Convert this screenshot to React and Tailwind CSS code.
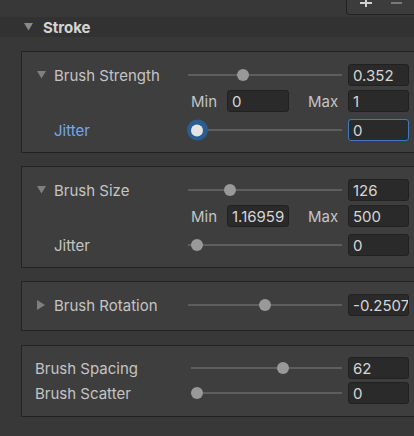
import React from "react";

function TriDown() {
  return (
    <svg width="9" height="8" viewBox="0 0 9 8">
      <polygon points="0,0 9,0 4.5,7.5" fill="#7f7f7f" />
    </svg>
  );
}
function TriRight() {
  return (
    <svg width="8" height="10" viewBox="0 0 8 10">
      <polygon points="0,0 8,5 0,10" fill="#7f7f7f" />
    </svg>
  );
}

function Slider({ frac, focused = false, width = 154, inset = 9 }) {
  const center = inset + frac * 132;
  return (
    <div className="relative h-[22px] flex items-center shrink-0" style={{ width }}>
      <div className="h-[2px] w-full bg-[#5e5e5e]" />
      {focused ? (
        <div
          className="absolute top-1/2 -translate-y-1/2 w-[21px] h-[21px] rounded-full bg-[#2c5d91] flex items-center justify-center"
          style={{ left: center - 10.5 }}
        >
          <div className="w-[12px] h-[12px] rounded-full bg-[#e4e4e4]" />
        </div>
      ) : (
        <div
          className="absolute top-1/2 -translate-y-1/2 w-[12px] h-[12px] rounded-full bg-[#999999]"
          style={{ left: center - 6 }}
        />
      )}
    </div>
  );
}

function Field({ value, w = "w-[61px]", focused = false }) {
  return (
    <div
      className={`${w} h-[22px] shrink-0 rounded-[3px] border ${
        focused ? "border-[#3d7ac0]" : "border-[#212121]"
      } bg-[#2a2a2a] pl-[4px] flex items-center overflow-hidden whitespace-nowrap text-[#d6d6d6]`}
    >
      {value}
    </div>
  );
}

function SliderRow({ label, icon, frac, value, blue = false, focused = false, pl = "pl-[15px]", labelW = "w-[166px]", sw = 154, inset = 9, noIcon = false }) {
  return (
    <div className="flex items-center h-[22px]">
      <div className={`${labelW} ${pl} flex items-center shrink-0`}>
        {!noIcon && <div className="w-[17px] flex items-center">{icon}</div>}
        <span className={blue ? "text-[#79a6ec]" : "text-[#c4c4c4]"}>{label}</span>
      </div>
      <Slider frac={frac} focused={focused} width={sw} inset={inset} />
      <div className="w-[6px] shrink-0" />
      <Field value={value} focused={focused} />
    </div>
  );
}

function MinMaxRow({ min, max }) {
  return (
    <div className="flex items-center h-[22px] text-[#c4c4c4]">
      <div className="w-[166px] shrink-0" />
      <div className="w-[39px] pl-[3px] shrink-0">Min</div>
      <Field value={min} w="w-[62px]" />
      <div className="w-[59px] pl-[19px] shrink-0">Max</div>
      <Field value={max} />
    </div>
  );
}

function Box({ children, cls = "" }) {
  return (
    <div className={`ml-[21px] w-[400px] border border-[#232323] bg-[#3e3e3e] ${cls}`}>
      {children}
    </div>
  );
}

export default function App() {
  return (
    <div className="w-[414px] h-[436px] overflow-hidden bg-[#383838] font-[Inter,sans-serif] text-[15px] leading-none">
      <div className="h-[17px] flex justify-end">
        <div className="w-[68px] h-[15px] rounded-bl-[4px] border-l border-b border-[#222222] bg-[#3c3c3c] relative">
          <div className="absolute left-[13px] top-[2px] w-[12px] h-[2px] bg-[#d0d0d0]" />
          <div className="absolute left-[18px] top-0 w-[2px] h-[7px] bg-[#d0d0d0]" />
          <div className="absolute left-[44px] top-[2px] w-[11px] h-[1.5px] bg-[#7a7a7a]" />
        </div>
      </div>
      <div className="h-[20px] bg-[#323232] flex items-center pl-[24px]">
        <svg width="9" height="8" viewBox="0 0 9 8">
          <polygon points="0,0 9,0 4.5,7.5" fill="#8a8a8a" />
        </svg>
        <span className="ml-[10px] font-bold text-[#d4d4d4]">Stroke</span>
      </div>

      <div className="h-[14px]" />
      <Box cls="pt-[12px] pb-[11px]">
        <SliderRow label="Brush Strength" icon={<TriDown />} frac={0.352} value="0.352" />
        <div className="h-[4px]" />
        <MinMaxRow min="0" max="1" />
        <div className="h-[7px]" />
        <SliderRow label="Jitter" frac={0} value="0" blue focused />
      </Box>

      <div className="h-[13px]" />
      <Box cls="pt-[12px] pb-[11px]">
        <SliderRow label="Brush Size" icon={<TriDown />} frac={0.25} value="126" />
        <div className="h-[4px]" />
        <MinMaxRow min="1.16959" max="500" />
        <div className="h-[7px]" />
        <SliderRow label="Jitter" frac={0} value="0" />
      </Box>

      <div className="h-[13px]" />
      <Box cls="pt-[12px] pb-[14px]">
        <SliderRow label="Brush Rotation" icon={<TriRight />} frac={0.515} value="-0.2507" />
      </Box>

      <div className="h-[14px]" />
      <Box cls="pt-[11px] pb-[12px]">
        <SliderRow label="Brush Spacing" frac={0.65} value="62" pl="pl-[13px]" labelW="w-[169px]" sw={151} inset={6} noIcon />
        <div className="h-[3px]" />
        <SliderRow label="Brush Scatter" frac={0} value="0" pl="pl-[13px]" labelW="w-[169px]" sw={151} inset={6} noIcon />
      </Box>
    </div>
  );
}
